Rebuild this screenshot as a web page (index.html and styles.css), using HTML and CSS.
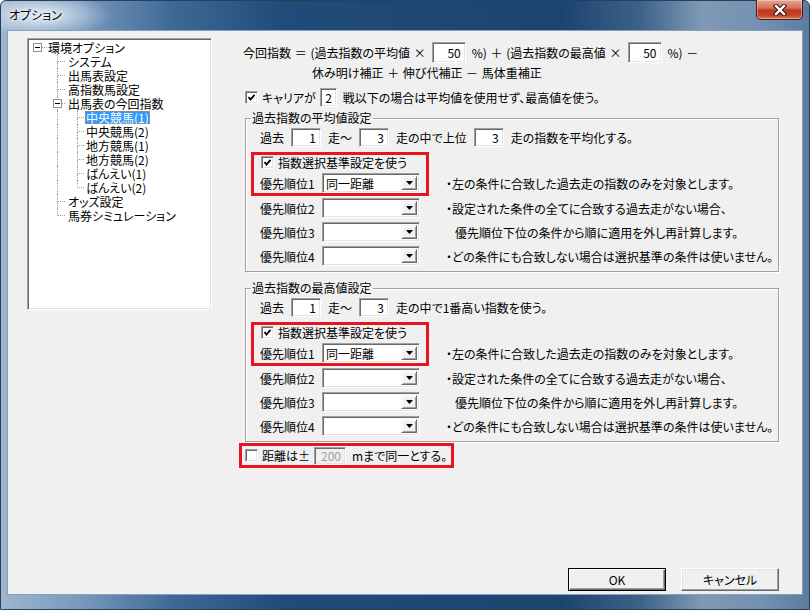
FILE: index.html
```html
<!DOCTYPE html>
<html lang="ja">
<head>
  <meta charset="UTF-8">
  <title>オプション</title>
  <link rel="stylesheet" href="styles.css">
</head>
<body>
<div id="window">
  <div id="titlebar">
    <span class="title">オプション</span>
    <div class="closeBtn">
      <svg width="16" height="12" viewBox="0 0 16 12">
        <path d="M4 2 L12 10 M12 2 L4 10" stroke="#3a1510" stroke-width="4.5" stroke-linecap="square"/>
        <path d="M4 2 L12 10 M12 2 L4 10" stroke="#fff" stroke-width="2.4" stroke-linecap="square"/>
      </svg>
    </div>
  </div>

  <div id="client">
    <div id="main">
      <!-- tree -->
      <div id="tree">
        <div class="node"><span class="toggle rootToggle"></span><span class="stub"></span><span class="label">環境オプション</span></div>
        <div class="node"><span class="indent"></span><span class="branch"><span class="up"></span><span class="dn"></span></span><span class="label">システム</span></div>
        <div class="node"><span class="indent"></span><span class="branch"><span class="up"></span><span class="dn"></span></span><span class="label">出馬表設定</span></div>
        <div class="node"><span class="indent"></span><span class="branch"><span class="up"></span><span class="dn"></span></span><span class="label">高指数馬設定</span></div>
        <div class="node"><span class="indent"></span><span class="branch"><span class="up"></span><span class="dn"></span><span class="toggle"></span></span><span class="label">出馬表の今回指数</span></div>
        <div class="node"><span class="indent"></span><span class="pipe"></span><span class="branch sub"><span class="up"></span><span class="dn"></span></span><span class="label selected">中央競馬(1)</span></div>
        <div class="node"><span class="indent"></span><span class="pipe"></span><span class="branch sub"><span class="up"></span><span class="dn"></span></span><span class="label">中央競馬(2)</span></div>
        <div class="node"><span class="indent"></span><span class="pipe"></span><span class="branch sub"><span class="up"></span><span class="dn"></span></span><span class="label">地方競馬(1)</span></div>
        <div class="node"><span class="indent"></span><span class="pipe"></span><span class="branch sub"><span class="up"></span><span class="dn"></span></span><span class="label">地方競馬(2)</span></div>
        <div class="node"><span class="indent"></span><span class="pipe"></span><span class="branch sub"><span class="up"></span><span class="dn"></span></span><span class="label">ばんえい(1)</span></div>
        <div class="node"><span class="indent"></span><span class="pipe"></span><span class="branch sub last"><span class="up"></span><span class="dn"></span></span><span class="label">ばんえい(2)</span></div>
        <div class="node"><span class="indent"></span><span class="branch"><span class="up"></span><span class="dn"></span></span><span class="label">オッズ設定</span></div>
        <div class="node"><span class="indent"></span><span class="branch last"><span class="up"></span><span class="dn"></span></span><span class="label">馬券シミュレーション</span></div>
      </div>

      <!-- settings -->
      <div id="settings">
        <div class="formula">
          <span>今回指数 ＝ (過去指数の平均値 ×</span>
          <input class="num pct" value="50">
          <span>%) ＋ (過去指数の最高値 ×</span>
          <input class="num pct" value="50">
          <span>%) －</span>
        </div>
        <div class="formula2">休み明け補正 ＋ 伸び代補正 － 馬体重補正</div>
        <div class="career">
          <span class="chk on"><svg width="9" height="9" viewBox="0 0 9 9"><path d="M1.5 4 L3.5 6.5 L7.5 1.8" fill="none" stroke="#000" stroke-width="1.8"/></svg></span>
          <span class="gapL">キャリアが</span>
          <input class="num small" value="2">
          <span>戦以下の場合は平均値を使用せず、最高値を使う。</span>
        </div>

        <fieldset class="group">
          <legend>過去指数の平均値設定</legend>
          <div class="past">
            <span>過去</span><input class="num" value="1"><span>走～</span><input class="num" value="3"><span>走の中で上位</span><input class="num" value="3"><span>走の指数を平均化する。</span>
          </div>
          <div class="prio">
            <div class="redbox"></div>
            <div class="chkrow">
              <span class="chk on"><svg width="9" height="9" viewBox="0 0 9 9"><path d="M1.5 4 L3.5 6.5 L7.5 1.8" fill="none" stroke="#000" stroke-width="1.8"/></svg></span>
              <span class="gapL">指数選択基準設定を使う</span>
            </div>
            <div class="prow r2"><span class="plabel">優先順位1</span><div class="combo"><span class="val">同一距離</span><span class="arrow"><svg width="7" height="4" viewBox="0 0 7 4"><path d="M0 0 H7 L3.5 4 Z" fill="#000"/></svg></span></div></div>
            <div class="note r2">・左の条件に合致した過去走の指数のみを対象とします。</div>
            <div class="prow r3"><span class="plabel">優先順位2</span><div class="combo"><span class="val"></span><span class="arrow"><svg width="7" height="4" viewBox="0 0 7 4"><path d="M0 0 H7 L3.5 4 Z" fill="#000"/></svg></span></div></div>
            <div class="note r3">・設定された条件の全てに合致する過去走がない場合、</div>
            <div class="prow r4"><span class="plabel">優先順位3</span><div class="combo"><span class="val"></span><span class="arrow"><svg width="7" height="4" viewBox="0 0 7 4"><path d="M0 0 H7 L3.5 4 Z" fill="#000"/></svg></span></div></div>
            <div class="note r4 indentNote">優先順位下位の条件から順に適用を外し再計算します。</div>
            <div class="prow r5"><span class="plabel">優先順位4</span><div class="combo"><span class="val"></span><span class="arrow"><svg width="7" height="4" viewBox="0 0 7 4"><path d="M0 0 H7 L3.5 4 Z" fill="#000"/></svg></span></div></div>
            <div class="note r5">・どの条件にも合致しない場合は選択基準の条件は使いません。</div>
          </div>
        </fieldset>

        <fieldset class="group second">
          <legend>過去指数の最高値設定</legend>
          <div class="past">
            <span>過去</span><input class="num" value="1"><span>走～</span><input class="num" value="3"><span>走の中で1番高い指数を使う。</span>
          </div>
          <div class="prio">
            <div class="redbox"></div>
            <div class="chkrow">
              <span class="chk on"><svg width="9" height="9" viewBox="0 0 9 9"><path d="M1.5 4 L3.5 6.5 L7.5 1.8" fill="none" stroke="#000" stroke-width="1.8"/></svg></span>
              <span class="gapL">指数選択基準設定を使う</span>
            </div>
            <div class="prow r2"><span class="plabel">優先順位1</span><div class="combo"><span class="val">同一距離</span><span class="arrow"><svg width="7" height="4" viewBox="0 0 7 4"><path d="M0 0 H7 L3.5 4 Z" fill="#000"/></svg></span></div></div>
            <div class="note r2">・左の条件に合致した過去走の指数のみを対象とします。</div>
            <div class="prow r3"><span class="plabel">優先順位2</span><div class="combo"><span class="val"></span><span class="arrow"><svg width="7" height="4" viewBox="0 0 7 4"><path d="M0 0 H7 L3.5 4 Z" fill="#000"/></svg></span></div></div>
            <div class="note r3">・設定された条件の全てに合致する過去走がない場合、</div>
            <div class="prow r4"><span class="plabel">優先順位3</span><div class="combo"><span class="val"></span><span class="arrow"><svg width="7" height="4" viewBox="0 0 7 4"><path d="M0 0 H7 L3.5 4 Z" fill="#000"/></svg></span></div></div>
            <div class="note r4 indentNote">優先順位下位の条件から順に適用を外し再計算します。</div>
            <div class="prow r5"><span class="plabel">優先順位4</span><div class="combo"><span class="val"></span><span class="arrow"><svg width="7" height="4" viewBox="0 0 7 4"><path d="M0 0 H7 L3.5 4 Z" fill="#000"/></svg></span></div></div>
            <div class="note r5">・どの条件にも合致しない場合は選択基準の条件は使いません。</div>
          </div>
        </fieldset>

        <div class="distance">
          <span class="chk"></span>
          <span class="gapL">距離は±</span>
          <input class="num dist" value="200" disabled>
          <span>mまで同一とする。</span>
        </div>
      </div>
    </div>

    <div id="buttons">
      <button class="btn default">OK</button>
      <button class="btn">キャンセル</button>
    </div>
  </div>
</div>
</body>
</html>
```

FILE: styles.css
```css
* { box-sizing: border-box; }
body {
  margin: 0;
  font-family: "Noto Sans CJK JP", "Noto Sans", sans-serif;
  font-size: 12px;
  font-feature-settings: "palt";
  color: #000;
  background: #fff;
}
#window {
  width: 810px;
  height: 610px;
  display: flex;
  flex-direction: column;
  padding: 0 6px 14px 6px;
  border: 1px solid #2b3f58;
  border-radius: 6px 6px 0 0;
  background:
    radial-gradient(ellipse 70px 22px at 40px 14px, rgba(235,242,250,0.9), rgba(235,242,250,0) 100%),
    linear-gradient(90deg, #9db6d0 0px, #7899bd 80px, #3f6a98 170px, #214b7a 280px, #1c4471 560px, #3d6289 640px, #7f99b5 700px, #7591b1 760px, #5a7ba0 810px);
}
#titlebar {
  height: 29px;
  display: flex;
  justify-content: space-between;
  align-items: flex-start;
}
.title {
  margin-top: 6px;
  padding-left: 2px;
  line-height: 16px;
  text-shadow: 0 0 6px #fff, 0 0 3px #fff;
}
.closeBtn {
  width: 47px;
  height: 20px;
  margin-top: -1px;
  margin-right: 0;
  display: flex;
  align-items: center;
  justify-content: center;
  border: 1px solid #4b1b14;
  border-top: none;
  border-radius: 0 0 5px 5px;
  background: linear-gradient(#e6a594 0%, #d6735c 40%, #c0381f 55%, #c1442a 80%, #db7d5d 100%);
  box-shadow: inset 0 0 0 1px rgba(255,255,255,0.35);
}
#client {
  flex: 1;
  display: flex;
  flex-direction: column;
  background: #f0f0f0;
  border: 1px solid #8aa0b9;
  padding: 7px 0 0 19px;
}
#main {
  display: flex;
  align-items: flex-start;
}

/* tree */
#tree {
  width: 185px;
  height: 272px;
  background: #fff;
  border: 1px solid;
  border-color: #a0a0a0 #fff #fff #a0a0a0;
  box-shadow: inset 1px 1px #696969, inset -1px -1px #e3e3e3;
  padding: 1px 0 0 1px;
}
.node {
  display: flex;
  height: 14px;
}
.indent { width: 28px; }
.pipe {
  width: 20px;
  border-left: 1px dotted #a0a0a0;
}
.branch {
  position: relative;
  width: 10px;
  display: flex;
  flex-direction: column;
}
.branch.sub { width: 8px; }
.branch .up {
  height: 8px;
  width: 8px;
  border-left: 1px dotted #a0a0a0;
  border-bottom: 1px dotted #a0a0a0;
}
.branch.sub .up { width: 7px; }
.branch .dn {
  height: 6px;
  border-left: 1px dotted #a0a0a0;
}
.branch.last .dn { border-left-color: transparent; }
.toggle {
  width: 9px;
  height: 9px;
  border: 1px solid #919191;
  background: linear-gradient(#000, #000) center / 5px 1px no-repeat, #fff;
}
.branch .toggle {
  position: absolute;
  left: -4px;
  top: 3px;
}
.rootToggle {
  margin: 3px 0 0 4px;
}
.stub {
  width: 5px;
  height: 8px;
  border-bottom: 1px dotted #a0a0a0;
}
.label {
  align-self: center;
  line-height: 13px;
  padding: 0 1px;
  white-space: nowrap;
}
.label.selected {
  background: #3399ff;
  color: #fff;
  outline: 1px dotted #d08a20;
  outline-offset: -1px;
}

/* settings */
#settings {
  width: 540px;
  margin-left: 27px;
}
.formula {
  display: flex;
  align-items: center;
  height: 21px;
  margin-top: 4px;
  padding-left: 4px;
  white-space: pre;
  word-spacing: 1px;
}
.formula2 {
  height: 20px;
  line-height: 20px;
  padding-left: 73px;
  white-space: pre;
  word-spacing: 1px;
}
.career {
  display: flex;
  align-items: center;
  height: 19px;
  margin-top: 5px;
  padding-left: 6px;
}
.gapL { margin-left: 4px; }

.num {
  width: 30px;
  height: 19px;
  margin: 0 7px;
  padding: 0 4px 0 0;
  border: 1px solid;
  border-color: #a0a0a0 #fff #fff #a0a0a0;
  box-shadow: inset 1px 1px #696969, inset -1px -1px #e3e3e3;
  background: #fff;
  font-family: inherit;
  font-size: 12px;
  color: #000;
  text-align: right;
  outline: none;
}
.num.pct { width: 34px; height: 21px; margin: 0 6px; }
.num.small { width: 17px; margin: 0 6px 0 4px; padding-right: 4px; }
.num.dist { width: 32px; height: 18px; margin: 0 6px 0 4px; background: #f0f0f0; color: #a0a0a0; }

.chk {
  width: 13px;
  height: 13px;
  display: inline-flex;
  align-items: center;
  justify-content: center;
  flex: none;
  background: #fff;
  border: 1px solid;
  border-color: #a0a0a0 #fff #fff #a0a0a0;
  box-shadow: inset 1px 1px #696969, inset -1px -1px #e3e3e3;
}

fieldset.group {
  margin: 4px 0 0 6px;
  padding: 0 5px 3px;
  border: 1px solid #a0a0a0;
  box-shadow: inset 1px 1px #fff, 1px 1px #fff;
  min-inline-size: 0;
}
fieldset.second { margin-top: 9px; }
.group legend {
  padding: 0 1px;
  line-height: 14px;
}
.past {
  display: flex;
  align-items: center;
  height: 19px;
  margin-top: 3px;
  padding-left: 9px;
}
.prio {
  display: grid;
  grid-template-columns: 178px 1fr;
  grid-template-rows: 18px 26px 24px 24px 24px;
  column-gap: 17px;
  margin-top: 5px;
}
.redbox {
  grid-area: 1 / 1 / 3 / 2;
  border: 3px solid #e8151f;
}
.chkrow {
  grid-area: 1 / 1;
  display: flex;
  align-items: center;
  padding: 3px 0 0 10px;
}
.prow {
  grid-column: 1;
  display: flex;
  align-items: center;
  padding-left: 9px;
}
.note {
  grid-column: 2;
  display: flex;
  align-items: center;
  white-space: nowrap;
}
.r2 { grid-row: 2; }
.r3 { grid-row: 3; }
.r4 { grid-row: 4; }
.r5 { grid-row: 5; }
.indentNote { padding-left: 9px; }
.plabel { width: 62px; }
.combo {
  width: 98px;
  height: 20px;
  display: flex;
  background: #fff;
  border: 1px solid;
  border-color: #a0a0a0 #fff #fff #a0a0a0;
  box-shadow: inset 1px 1px #696969, inset -1px -1px #e3e3e3;
  padding: 2px;
}
.combo .val {
  flex: 1;
  padding-left: 1px;
  line-height: 16px;
}
.combo .arrow {
  width: 16px;
  display: flex;
  align-items: center;
  justify-content: center;
  background: #f0f0f0;
  border: 1px solid;
  border-color: #f0f0f0 #696969 #696969 #f0f0f0;
  box-shadow: inset 1px 1px #fff, inset -1px -1px #a0a0a0;
}

.distance {
  display: inline-flex;
  align-items: center;
  height: 25px;
  margin-top: 1px;
  padding: 0 4px 0 3px;
  border: 3px solid #e8151f;
}

/* buttons */
#buttons {
  margin-top: auto;
  margin-bottom: 3px;
  padding-right: 23px;
  display: flex;
  justify-content: flex-end;
  gap: 15px;
}
.btn {
  width: 98px;
  height: 23px;
  font-family: inherit;
  font-size: 12px;
  font-feature-settings: "palt";
  color: #000;
  background: #f0f0f0;
  border: 1px solid;
  border-color: #fff #696969 #696969 #fff;
  box-shadow: inset -1px -1px #a0a0a0, inset 1px 1px #e3e3e3;
  padding: 0;
}
.btn.default {
  border-color: #000;
  box-shadow: inset 1px 1px #fff, inset -1px -1px #696969, inset -2px -2px #a0a0a0;
}
```
